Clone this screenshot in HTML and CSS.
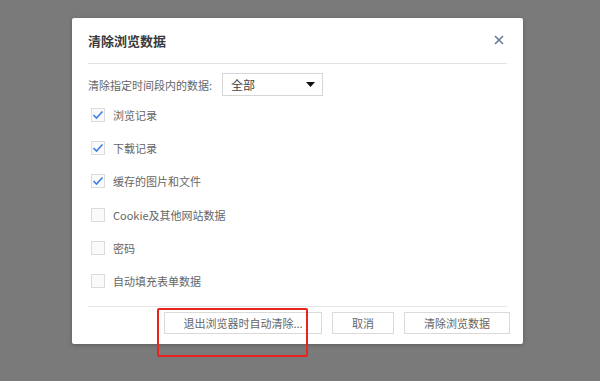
FILE: index.html
```html
<!DOCTYPE html>
<html lang="zh-CN">
<head>
<meta charset="utf-8">
<link rel="stylesheet" href="styles.css">
</head>
<body>
<div class="dialog">
  <div class="header">
    <div class="title">清除浏览数据</div>
    <svg class="close" width="10" height="10" viewBox="0 0 10 10"><path d="M1 1L9 9M9 1L1 9" stroke="#6a7694" stroke-width="1.6" fill="none"/></svg>
  </div>
  <div class="range">
    <span class="range-label">清除指定时间段内的数据:</span>
    <div class="select"><span>全部</span><svg width="9" height="5" viewBox="0 0 9 5"><path d="M0 0H9L4.5 5Z" fill="#111"/></svg></div>
  </div>
  <div class="list">
    <div class="row"><span class="box checked"><svg width="12" height="10" viewBox="0 0 12 10"><path d="M1.5 5L4.5 8L10.5 1.5" stroke="#3d7fe0" stroke-width="1.6" fill="none"/></svg></span><span>浏览记录</span></div>
    <div class="row"><span class="box checked"><svg width="12" height="10" viewBox="0 0 12 10"><path d="M1.5 5L4.5 8L10.5 1.5" stroke="#3d7fe0" stroke-width="1.6" fill="none"/></svg></span><span>下载记录</span></div>
    <div class="row"><span class="box checked"><svg width="12" height="10" viewBox="0 0 12 10"><path d="M1.5 5L4.5 8L10.5 1.5" stroke="#3d7fe0" stroke-width="1.6" fill="none"/></svg></span><span>缓存的图片和文件</span></div>
    <div class="row"><span class="box"></span><span>Cookie及其他网站数据</span></div>
    <div class="row"><span class="box"></span><span>密码</span></div>
    <div class="row"><span class="box"></span><span>自动填充表单数据</span></div>
  </div>
  <div class="footer">
    <button class="btn w1">退出浏览器时自动清除...</button>
    <button class="btn w2">取消</button>
    <button class="btn w3">清除浏览数据</button>
  </div>
  <div class="mark"></div>
</div>
</body>
</html>
```
FILE: styles.css
```css
html, body {
  margin: 0;
  padding: 0;
}
body {
  width: 600px;
  height: 381px;
  background: #7a7a7a;
  font-family: "Noto Sans CJK SC", "Noto Sans", sans-serif;
  overflow: hidden;
}
.dialog {
  position: relative;
  margin: 18px 0 0 72px;
  width: 451px;
  height: 326px;
  background: #fff;
  border-radius: 2px;
  box-shadow: 0 1px 4px rgba(0,0,0,0.25);
  display: flex;
  flex-direction: column;
  box-sizing: border-box;
}
.header {
  margin: 0 16px;
  height: 45px;
  border-bottom: 1px solid #e3e3e3;
  display: flex;
  align-items: center;
  justify-content: space-between;
}
.title {
  font-size: 13px;
  font-weight: bold;
  color: #3a3a3a;
  line-height: 16px;
}
.close {
  margin-right: 3px;
  margin-top: -2px;
}
.range {
  margin: 9px 16px 0;
  display: flex;
  align-items: center;
  font-size: 11px;
  color: #666;
}
.range-label {
  width: 134px;
}
.select {
  width: 101px;
  height: 23px;
  box-sizing: border-box;
  border: 1px solid #d6d6d6;
  display: flex;
  align-items: center;
  justify-content: space-between;
  padding: 0 7px 0 8px;
  font-size: 12px;
  color: #444;
}
.list {
  margin: 2px 16px 0 19px;
  display: flex;
  flex-direction: column;
}
.row {
  height: 33.3px;
  display: flex;
  align-items: center;
  font-size: 11px;
  color: #666;
}
.box {
  width: 14px;
  height: 14px;
  box-sizing: border-box;
  border: 1px solid #dcdcdc;
  background: #fafafa;
  margin-right: 8px;
  display: flex;
  align-items: center;
  justify-content: center;
}
.footer {
  margin: 8px 16px 0 16px;
  border-top: 1px solid #e6e6e6;
  padding-top: 5px;
  display: flex;
  justify-content: flex-end;
  gap: 10px;
}
.btn {
  height: 22px;
  border: 1px solid #dadada;
  background: #fff;
  font-family: "Noto Sans CJK SC", "Noto Sans", sans-serif;
  font-size: 11px;
  color: #666;
  padding: 0;
  margin: 0;
}
.w1 { width: 158px; }
.w2 { width: 62px; }
.w3 { width: 106px; margin-right: -3px; }
.mark {
  position: absolute;
  left: 85px;
  top: 290px;
  width: 151px;
  height: 49px;
  box-sizing: border-box;
  border: 2px solid #e8251d;
  border-radius: 2px;
}
```
